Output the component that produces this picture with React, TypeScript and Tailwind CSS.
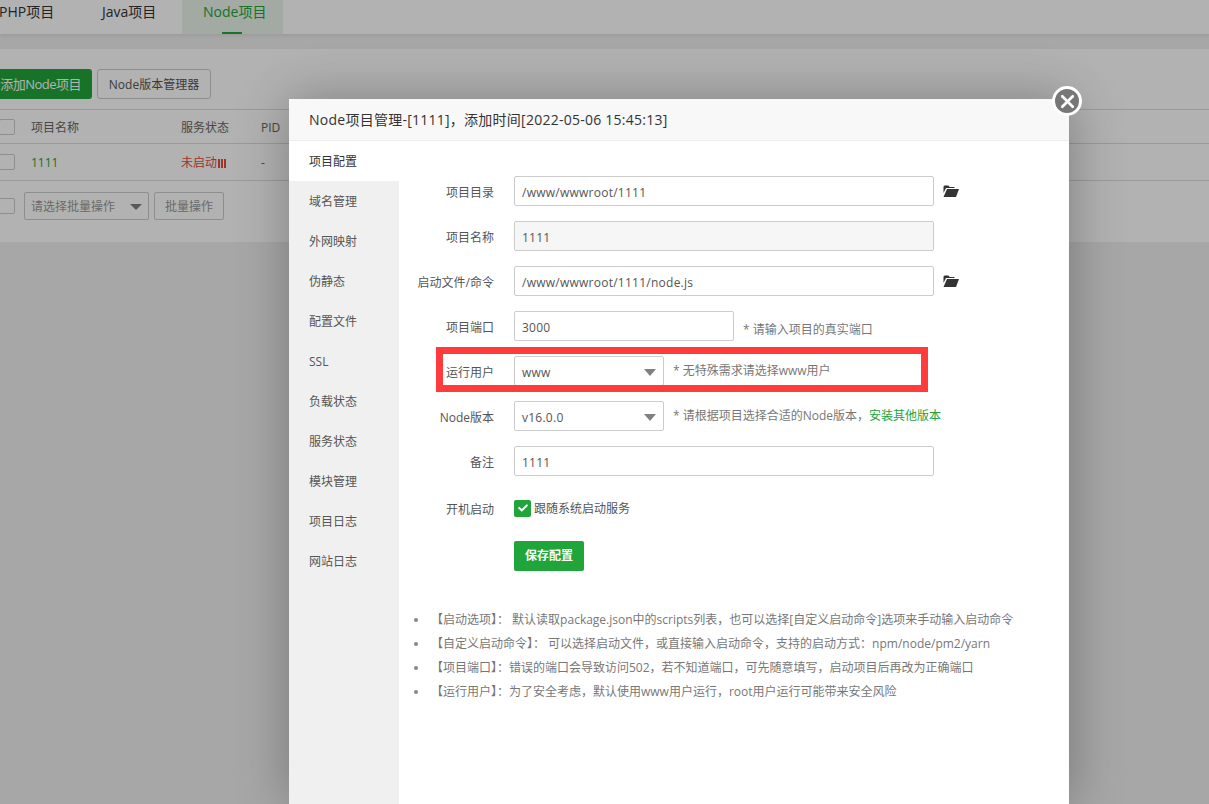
import React, { FC } from 'react'
import { FaCheck } from 'react-icons/fa'
import { X } from 'lucide-react'

const sideItems = ['项目配置', '域名管理', '外网映射', '伪静态', '配置文件', 'SSL', '负载状态', '服务状态', '模块管理', '项目日志', '网站日志']

const notes = [
  '【启动选项】： 默认读取package.json中的scripts列表，也可以选择[自定义启动命令]选项来手动输入启动命令',
  '【自定义启动命令】： 可以选择启动文件，或直接输入启动命令，支持的启动方式：npm/node/pm2/yarn',
  '【项目端口】：错误的端口会导致访问502，若不知道端口，可先随意填写，启动项目后再改为正确端口',
  '【运行用户】：为了安全考虑，默认使用www用户运行，root用户运行可能带来安全风险',
]

const Caret: FC = () => (
  <span className="absolute right-[7px] top-[12px] h-0 w-0 border-x-[6px] border-t-[7px] border-x-transparent border-t-[#808080]" />
)

const Row: FC<{ label: string; children: React.ReactNode }> = ({ label, children }) => (
  <div className="flex h-[30px] items-center">
    <label className="w-[95px] shrink-0 pt-[3px] text-right text-[12px] text-[#555]">{label}</label>
    <div className="ml-[20px] flex items-center">{children}</div>
  </div>
)

const Field: FC<{ value: string; width: string; muted?: boolean }> = ({ value, width, muted }) => (
  <div className={`flex h-[30px] items-center rounded-[2px] border border-[#ccc] px-[7px] pt-[3px] text-[12px] tracking-[0.25px] text-[#555] ${width} ${muted ? 'bg-[#f6f6f6]' : 'bg-white'}`}>
    {value}
  </div>
)

const Select: FC<{ value: string }> = ({ value }) => (
  <div className="relative flex h-[30px] w-[150px] items-center rounded-[2px] border border-[#ccc] bg-white px-[7px] pt-[3px] text-[12px] tracking-[0.25px] text-[#555]">
    {value}
    <Caret />
  </div>
)

const Hint: FC<{ children: React.ReactNode }> = ({ children }) => (
  <span className="ml-[9px] text-[12px] text-[#777]">{children}</span>
)

const Folder: FC = () => (
  <svg viewBox="0 0 16 12" className="ml-[9px] h-[12px] w-[16px] fill-[#333]">
    <path d="M.5 1.5 1.5.5h4l1 1.5h5v1H3L.5 8z" />
    <path d="M4 4h12l-3 8H.5z" />
  </svg>
)

const Box: FC = () => <span className="ml-[-1px] block h-[16px] w-[16px] rounded-[2px] border border-[#ccc] bg-white" />

const Page: FC = () => (
  <div className="h-[804px] bg-[#f0f0f0]">
    <div className="flex h-[34px] bg-white text-[14px] text-[#333] shadow-[0_2px_4px_rgba(0,0,0,0.08)]">
      <div className="ml-[-1px] flex h-full w-[83px] items-center pb-[11px]">PHP项目</div>
      <div className="flex h-full w-[100px] items-center pb-[11px] pl-[20px]">Java项目</div>
      <div className="relative flex h-full w-[101px] items-center bg-[#e8f4ea] pb-[11px] pl-[21px] text-[#20a53a]">
        Node项目
        <span className="absolute bottom-0 left-[40px] h-[2px] w-[20px] bg-[#20a53a]" />
      </div>
    </div>
    <div className="mt-[15px] h-[193px] bg-white pt-[20px] text-[12px] text-[#666]">
      <div className="flex h-[30px] gap-[5px]">
        <div className="flex w-[92px] items-center justify-end whitespace-nowrap rounded-r-[3px] bg-[#20a53a] pr-[11px] pt-[1px] text-[13px] tracking-[-0.5px] text-white">添加Node项目</div>
        <div className="flex w-[114px] items-center justify-center rounded-[3px] border border-[#ccc] bg-white pt-[1px] text-[12px] text-[#555]">Node版本管理器</div>
      </div>
      <div className="mt-[10px] flex h-[35px] items-center border-y border-[#ddd]">
        <Box />
        <span className="ml-[16px] w-[150px] pt-[2px]">项目名称</span>
        <span className="w-[80px] pt-[2px]">服务状态</span>
        <span className="pt-[2px]">PID</span>
      </div>
      <div className="flex h-[37px] items-center border-b border-[#ddd]">
        <Box />
        <span className="ml-[16px] w-[150px] pt-[2px] text-[#20a53a]">1111</span>
        <span className="flex w-[80px] items-center pt-[2px] text-[#e54a3a]">
          未启动
          <span className="ml-[1px] flex gap-[1px]">
            <i className="block h-[9px] w-[2px] bg-[#e54a3a]" />
            <i className="block h-[9px] w-[2px] bg-[#e54a3a]" />
            <i className="block h-[9px] w-[2px] bg-[#e54a3a]" />
          </span>
        </span>
        <span className="pt-[2px]">-</span>
      </div>
      <div className="mt-[11px] flex h-[28px] items-center">
        <Box />
        <div className="relative ml-[9px] flex h-[28px] w-[125px] items-center rounded-[2px] border border-[#ccc] pl-[6px] pt-[2px] text-[#999]">
          请选择批量操作
          <span className="absolute right-[6px] top-[11px] h-0 w-0 border-x-[6px] border-t-[6px] border-x-transparent border-t-[#808080]" />
        </div>
        <div className="ml-[5px] flex h-[28px] w-[70px] items-center justify-center rounded-[2px] border border-[#ccc] pt-[2px] text-[#999]">批量操作</div>
      </div>
    </div>
  </div>
)

const Modal: FC = () => (
  <div className="absolute left-[289px] top-[99px] h-[705px] w-[780px] bg-white shadow-[1px_1px_50px_rgba(0,0,0,0.3)]">
    <div className="flex h-[42px] items-center border-b border-[#eee] bg-[#f8f8f8] pl-[20px] text-[14px] tracking-[0.25px] text-[#333]">
      Node项目管理-[1111]，添加时间[2022-05-06 15:45:13]
    </div>
    <button className="absolute right-[-13px] top-[-13px] flex h-[30px] w-[30px] items-center justify-center rounded-full border-[3px] border-white bg-[#777] text-white">
      <X size={21} strokeWidth={3} className="shrink-0" />
    </button>
    <div className="flex h-[663px]">
      <ul className="w-[110px] shrink-0 bg-[#f0f0f0] text-[12px] text-[#555]">
        {sideItems.map((item, i) => (
          <li key={item} className={`flex h-[40px] items-center pl-[20px] pt-[2px] ${i === 0 ? 'bg-white text-[#333]' : ''}`}>
            {item}
          </li>
        ))}
      </ul>
      <div className="flex-1 pt-[35px]">
        <div className="flex flex-col gap-[15px]">
          <Row label="项目目录">
            <Field value="/www/wwwroot/1111" width="w-[420px]" />
            <Folder />
          </Row>
          <Row label="项目名称">
            <Field value="1111" width="w-[420px]" muted />
          </Row>
          <Row label="启动文件/命令">
            <Field value="/www/wwwroot/1111/node.js" width="w-[420px]" />
            <Folder />
          </Row>
          <Row label="项目端口">
            <Field value="3000" width="w-[220px]" />
            <span className="pt-[3px]">
              <Hint>* 请输入项目的真实端口</Hint>
            </span>
          </Row>
          <Row label="运行用户">
            <Select value="www" />
            <Hint>* 无特殊需求请选择www用户</Hint>
          </Row>
          <Row label="Node版本">
            <Select value="v16.0.0" />
            <Hint>
              * 请根据项目选择合适的Node版本，<span className="text-[#20a53a]">安装其他版本</span>
            </Hint>
          </Row>
          <Row label="备注">
            <Field value="1111" width="w-[420px]" />
          </Row>
        </div>
        <div className="mt-[17px]">
          <Row label="开机启动">
            <span className="flex h-[17px] w-[17px] items-center justify-center rounded-[2px] bg-[#20a53a] text-white">
              <FaCheck size={10} />
            </span>
            <span className="ml-[3px] pt-[1px] text-[12px] text-[#555]">跟随系统启动服务</span>
          </Row>
        </div>
        <div className="ml-[115px] mt-[18px] flex h-[30px] w-[70px] items-center justify-center rounded-[2px] bg-[#20a53a] text-[12px] font-bold text-white">
          保存配置
        </div>
        <ul className="ml-[15px] mt-[37px] text-[12px] text-[#777]">
          {notes.map(n => (
            <li key={n} className="flex h-[24px] items-center">
              <span className="mr-[13px] h-[4px] w-[4px] shrink-0 rounded-full bg-[#888]" />
              {n}
            </li>
          ))}
        </ul>
      </div>
    </div>
    <div className="absolute left-[147px] top-[248px] h-[45px] w-[492px] border-[7px] border-[#ff3b3b]" />
  </div>
)

const App: FC = () => (
  <div className="relative h-[804px] overflow-hidden font-['Open_Sans','Noto_Sans_CJK_SC',sans-serif]">
    <Page />
    <div className="absolute inset-0 bg-black/30" />
    <Modal />
  </div>
)

export default App
